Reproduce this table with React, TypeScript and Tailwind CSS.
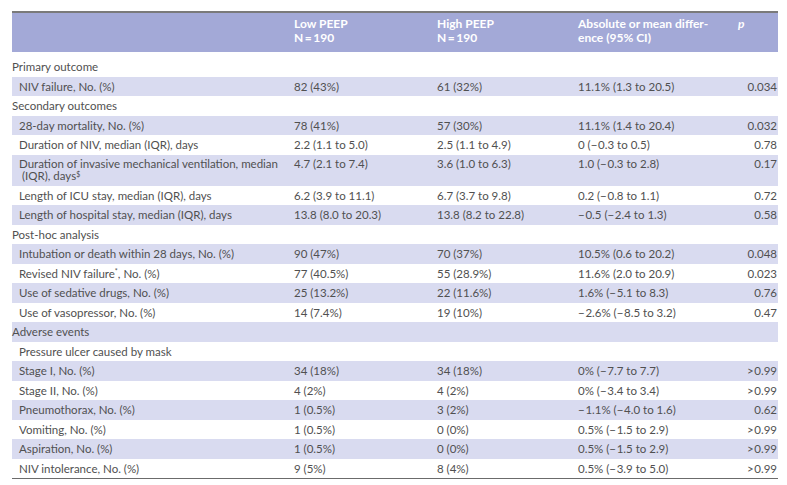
import React from 'react';

type Row = {
  label: React.ReactNode;
  group?: boolean;
  indent?: boolean;
  tall?: boolean;
  low?: string;
  high?: string;
  diff?: string;
  p?: string;
};

// minus sign followed by a hair space, as typeset in the source table
const M = '\u2212\u200a';
const GT = '>\u200a0.99';

const rows: Row[] = [
  { label: 'Primary outcome', group: true },
  { label: 'NIV failure, No. (%)', low: '82 (43%)', high: '61 (32%)', diff: '11.1% (1.3 to 20.5)', p: '0.034' },
  { label: 'Secondary outcomes', group: true },
  { label: '28-day mortality, No. (%)', low: '78 (41%)', high: '57 (30%)', diff: '11.1% (1.4 to 20.4)', p: '0.032' },
  { label: 'Duration of NIV, median (IQR), days', low: '2.2 (1.1 to 5.0)', high: '2.5 (1.1 to 4.9)', diff: `0 (${M}0.3 to 0.5)`, p: '0.78' },
  {
    label: (
      <>
        <span className="block">Duration of invasive mechanical ventilation, median</span>
        <span className="block pl-[3px]">
          (IQR), days<sup className="text-[7px]">$</sup>
        </span>
      </>
    ),
    tall: true,
    low: '4.7 (2.1 to 7.4)',
    high: '3.6 (1.0 to 6.3)',
    diff: `1.0 (${M}0.3 to 2.8)`,
    p: '0.17',
  },
  { label: 'Length of ICU stay, median (IQR), days', low: '6.2 (3.9 to 11.1)', high: '6.7 (3.7 to 9.8)', diff: `0.2 (${M}0.8 to 1.1)`, p: '0.72' },
  { label: 'Length of hospital stay, median (IQR), days', low: '13.8 (8.0 to 20.3)', high: '13.8 (8.2 to 22.8)', diff: `${M}0.5 (${M}2.4 to 1.3)`, p: '0.58' },
  { label: 'Post-hoc analysis', group: true },
  { label: 'Intubation or death within 28 days, No. (%)', low: '90 (47%)', high: '70 (37%)', diff: '10.5% (0.6 to 20.2)', p: '0.048' },
  {
    label: (
      <>
        Revised NIV failure<sup className="text-[7px]">*</sup>, No. (%)
      </>
    ),
    low: '77 (40.5%)',
    high: '55 (28.9%)',
    diff: '11.6% (2.0 to 20.9)',
    p: '0.023',
  },
  { label: 'Use of sedative drugs, No. (%)', low: '25 (13.2%)', high: '22 (11.6%)', diff: `1.6% (${M}5.1 to 8.3)`, p: '0.76' },
  { label: 'Use of vasopressor, No. (%)', low: '14 (7.4%)', high: '19 (10%)', diff: `${M}2.6% (${M}8.5 to 3.2)`, p: '0.47' },
  { label: 'Adverse events', group: true },
  { label: 'Pressure ulcer caused by mask', group: true, indent: true },
  { label: 'Stage I, No. (%)', low: '34 (18%)', high: '34 (18%)', diff: `0% (${M}7.7 to 7.7)`, p: GT },
  { label: 'Stage II, No. (%)', low: '4 (2%)', high: '4 (2%)', diff: `0% (${M}3.4 to 3.4)`, p: GT },
  { label: 'Pneumothorax, No. (%)', low: '1 (0.5%)', high: '3 (2%)', diff: `${M}1.1% (${M}4.0 to 1.6)`, p: '0.62' },
  { label: 'Vomiting, No. (%)', low: '1 (0.5%)', high: '0 (0%)', diff: `0.5% (${M}1.5 to 2.9)`, p: GT },
  { label: 'Aspiration, No. (%)', low: '1 (0.5%)', high: '0 (0%)', diff: `0.5% (${M}1.5 to 2.9)`, p: GT },
  { label: 'NIV intolerance, No. (%)', low: '9 (5%)', high: '8 (4%)', diff: `0.5% (${M}3.9 to 5.0)`, p: GT },
];

const cols = 'grid grid-cols-[282px_143px_141px_160px_1fr]';

export default function App() {
  return (
    <div
      className="w-[787px] h-[485px] bg-white pt-[11px] pl-[12px] text-[11.5px] text-[#505050]"
      style={{ fontFamily: 'Lato, "Liberation Sans", sans-serif' }}
    >
      <div className="w-[766px]">
        {/* header */}
        <div className={`${cols} h-[41px] border-t-2 border-[#7a7a7a] bg-[#a3a9d7] text-white text-[12px] font-bold leading-[14px] pt-[4px]`}>
          <div />
          <div>
            Low PEEP
            <br />
            N{'\u2009'}={'\u2009'}190
          </div>
          <div>
            High PEEP
            <br />
            N{'\u2009'}={'\u2009'}190
          </div>
          <div>
            Absolute or mean differ-
            <br />
            ence (95% CI)
          </div>
          <div className="italic">p</div>
        </div>

        <div className="pt-[5px] border-b border-[#6b6b6b]">
          {rows.map((r, i) => (
            <div
              key={i}
              className={`${cols} items-center ${r.tall ? 'h-[31px] leading-[12px]' : 'h-[19.5px]'} ${
                i % 2 === 1 ? 'bg-[#d9dbf0]' : 'bg-white'
              }`}
            >
              <div className={r.group && !r.indent ? '' : 'pl-[7px]'}>{r.label}</div>
              <div className={r.tall ? 'self-start pt-[3px]' : ''}>{r.low}</div>
              <div className={r.tall ? 'self-start pt-[3px]' : ''}>{r.high}</div>
              <div className={r.tall ? 'self-start pt-[3px]' : ''}>{r.diff}</div>
              <div className={`text-right pr-[1px] ${r.tall ? 'self-start pt-[3px]' : ''}`}>{r.p}</div>
            </div>
          ))}
        </div>
      </div>
    </div>
  );
}
